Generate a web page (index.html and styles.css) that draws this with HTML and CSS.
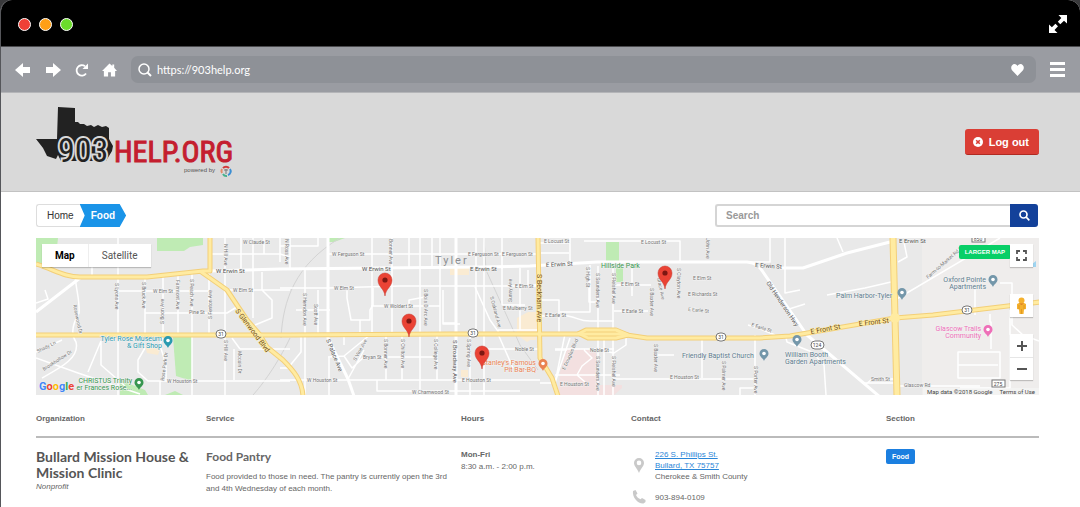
FILE: index.html
```html
<!DOCTYPE html>
<html lang="en">
<head>
  <meta charset="UTF-8">
  <meta name="viewport" content="width=device-width, initial-scale=1.0">
  <title>903Help.org - Food</title>
  <link rel="stylesheet" href="styles.css">
</head>
<body>

  <!-- Browser frame -->
  <div class="window">
    <div class="titlebar">
      <div class="dots">
        <span class="dot red"></span>
        <span class="dot orange"></span>
        <span class="dot green"></span>
      </div>
      <button class="icon-btn" aria-label="Full screen">
        <svg width="18" height="18" viewBox="0 0 18 18" fill="#fff"><path d="M9.500 0H18V8.500L15 5.800L11.300 9.300L8.800 6.800L12.300 3Z"/><path d="M0 9.500L2.900 12.300L6.400 8.700L9 11.200L5.500 15L8.500 18H0Z"/></svg>
      </button>
    </div>

    <div class="toolbar">
      <button class="icon-btn" aria-label="Back">
        <svg width="16" height="14" viewBox="0 0 16 14" fill="#fff"><path d="M0 7L8 0V4H15V10H8V14Z"/></svg>
      </button>
      <button class="icon-btn" aria-label="Forward">
        <svg width="16" height="14" viewBox="0 0 16 14" fill="#fff"><path d="M16 7L8 0V4H1V10H8V14Z"/></svg>
      </button>
      <button class="icon-btn" aria-label="Reload">
        <svg width="13" height="14" viewBox="0 0 13 14"><path d="M11 10.500A5.200 5.200 0 1 1 10 3.300" fill="none" stroke="#fff" stroke-width="1.800"/><path d="M13 0.500V6H7.500Z" fill="#fff"/></svg>
      </button>
      <button class="icon-btn" aria-label="Home">
        <svg width="15" height="14" viewBox="0 0 16 14" fill="#fff"><path d="M8 0L11 2.800V1H13V4.700L16 8H14V14H9.500V9.500H6.500V14H2V8H0Z"/></svg>
      </button>
      <div class="address">
        <svg width="14" height="14" viewBox="0 0 14 14" fill="none" stroke="#fff"><circle cx="6" cy="6" r="5" stroke-width="1.500"/><path d="M9.500 9.500L13 13" stroke-width="2"/></svg>
        <input type="text" value="https://903help.org" aria-label="Address">
        <svg width="13" height="12" viewBox="0 0 13 12" fill="#fff"><path d="M6.500 12L1 6.300C-1 3.500 1 0 3.500 0C5 0 6 1 6.500 2C7 1 8 0 9.500 0C12 0 14 3.500 12 6.300Z"/></svg>
      </div>
      <button class="icon-btn menu" aria-label="Menu">
        <svg width="15" height="15" viewBox="0 0 15 15" fill="#fff"><path d="M0 0H15V3H0ZM0 6H15V9H0ZM0 12H15V15H0Z"/></svg>
      </button>
    </div>

    <header class="site-header">
      <a href="#" class="logo" aria-label="903Help.org">
        <svg width="200" height="74" viewBox="0 0 200 74">
          <path d="M22 2L39 3V17L42 17L44 19L48 19L51 21L55 20L58 22L62 20L66 22L70 21L73 23L73 34L77 41L76 46L73 51L70 56L25 56L22 50L20 54L11 51L7 43L0 34L21 34Z" fill="#222"/>
          <text class="logo-903" x="22" y="57">903</text>
          <text class="logo-help" x="78" y="57">HELP.ORG</text>
          <text class="logo-by" x="148" y="67">powered by</text>
          <g fill="none" stroke-width="2">
            <path d="M187 63A4 4 0 0 1 193 63" stroke="#d33b3b"/>
            <path d="M194 64A4 4 0 0 1 192 70" stroke="#3b8ed3"/>
            <path d="M191 71A4 4 0 0 1 187 69" stroke="#45b08c"/>
            <path d="M186 68A4 4 0 0 1 186 64" stroke="#e48a68"/>
          </g>
          <path d="M188 65H192M190 64V69" stroke="#777"/>
        </svg>
      </a>
      <button class="logout">
        <svg width="10" height="10" viewBox="0 0 10 10"><circle cx="5" cy="5" r="5" fill="#fff"/><path d="M3.200 3.200L6.800 6.800M6.800 3.200L3.200 6.800" stroke="#da3e35" stroke-width="1.600"/></svg>
        Log out
      </button>
    </header>

    <main>
      <div class="top-row">
        <nav class="crumbs" aria-label="Breadcrumb">
          <a href="#" class="crumb">Home</a>
          <a href="#" class="crumb active">Food</a>
        </nav>
        <form class="search">
          <input type="text" placeholder="Search" aria-label="Search">
          <button type="button" aria-label="Search">
            <svg width="11" height="11" viewBox="0 0 11 11" fill="none" stroke="#fff" stroke-width="1.700"><circle cx="4.500" cy="4.500" r="3.500"/><path d="M7.200 7.200L10.300 10.300"/></svg>
          </button>
        </form>
      </div>

      <div class="map">
        <svg class="map-canvas" viewBox="36 238 1003 157" preserveAspectRatio="xMidYMid slice">
          <defs>
            <g id="pin">
              <path d="M0 0C-1 -8 -7 -9 -7 -16A7 7 0 0 1 7 -16C7 -9 1 -8 0 0Z" fill="#ea4335" stroke="#c5372c" stroke-width="0.500"/>
              <circle cy="-16" r="2.600" fill="#7c1712"/>
            </g>
            <g id="poi">
              <path d="M0 0C-1 -3 -4.500 -4 -4.500 -7.500A4.500 4.500 0 0 1 4.500 -7.500C4.500 -4 1 -3 0 0Z"/>
              <circle cy="-7.500" r="1.800" fill="#fff"/>
            </g>
          </defs>

          <!-- land -->
          <path d="M36 238H1039V395H36Z" fill="#e9e9e9"/>
          <path d="M922 238H1039V395H922Z" fill="#efedec"/>
          <g fill="#bfebb4">
            <path d="M36 238H58L55 266L36 264Z"/>
            <path d="M157 238H203V245L190 247L184 251H157Z"/>
            <path d="M173 337H192V381L176 376Z"/>
            <path d="M120 380L145 390L148 395H120ZM165 395L175 391L183 395Z"/>
            <path d="M329 238H345L334 242H329Z"/>
            <path d="M606 242H619V262H606ZM616 268H623V282H616Z"/>
          </g>
          <path d="M567 348L584 349L596 352L600 385H622V388L614 395H558L560 372Z" fill="#f3e0e0"/>
          <path d="M517 318L528 312H538V335L527 342L517 335ZM450 268H469V275H450ZM461 370H468V377H461ZM530 312H536V340H530ZM145 346L160 349L158 355L147 353Z" fill="#faebd2"/>
          <path d="M1028 267L1036 261V267Z" fill="#9fd4f0"/>

          <!-- railways -->
          <path d="M281 338C283 300 295 265 340 238M484 238L486 270L520 345L538 370M290 338C277 365 262 385 253 395" fill="none" stroke="#d3d3d3"/>

          <!-- side streets -->
          <g class="minor">
            <path d="M92 267V275M118 238V395M145 275V335M163 275V335L160 345L166 365V381M178 275V335M192 271V395M209 271V335M225 238V395M241 238V271M264 238V254M280 238V262M253 238V318M290 238V269"/>
            <path d="M210 254H280L290 257M118 291H210M227 290H290M145 313H227L240 305M262 272V290L272 300V318L255 325M240 349H290M240 349L232 338M234 349V380"/>
            <path d="M75 275C76 290 80 300 79 313C72 325 71 335 76 342C80 358 60 368 42 378M36 352L62 340M36 358L78 373L140 394M101 341L88 372M101 341V365L125 386M145 348L138 360V372L148 381H290M36 303L48 299L45 290M160 381V395"/>
            <path d="M280 246H318V238M328 254H538M328 269V238M392 238V335M372 238V333M440 238V333M409 238V269M420 238V333M432 238V269M476 238V334M484 238V395M502 238V269M520 268V330M528 270V285H540"/>
            <path d="M280 288H328L400 286H540M347 287V298L351 320H370V310L373 305V288M296 310H330M305 269V395M318 290V334M373 300V306M371 306H440M409 306V300L425 297M443 290V324H460M360 320V334M498 330H540M502 268V305H525M475 287L490 320L500 334"/>
            <path d="M301 335V352L288 368H280M328 357L344 356L371 334M344 334V345M344 356L352 368L364 357H420M348 379L364 350M386 334V380M402 334V380M420 334V395M437 334V380M404 357H437M280 380H540M329 357V395M377 380V391H520M484 380V391M470 334V395M498 334L513 368M484 349H540M457 323H443"/>
            <path d="M540 243H570V238M570 238V262M584 241H680V262M541 253H569M540 300H559V334M541 316H568C580 318 578 321 590 321H614M598 266V395M590 265V312H560M613 264V395M589 267V302H598M555 350H567M604 335V395M614 311H648M614 285H651M632 265V296M651M651 262V320H655V395M636 243V262M691 238V262M664 262V290L672 308L675 310H722V315L711 322M674 266V395M682 266V310M674 293H740L745 287V262M674 278H744M736 293L737 312M702 264V340M723 300V395M637 262V238M707 238V250H752"/>
            <path d="M540 383H555L565 334M555 375H620M555 383L560 367L570 338M614 349H555M584 350L592 358L582 366L577 375L585 382M598 350L614 353L626 345V334M614 379H758M655 355H674M702 340V378M755 335V395M742 388H758M740 395V388H758M775 335L758 328L748 325M770 238V262H745M785 238V293L800 290M786 310L805 304M827 295L865 288 891 282M826 395L824 365L812 352L787 342L786 338M865 385L872 379H895M862 383H900M897 386H980M837 238L843 252"/>
            <path d="M904 242L907 257L898 262M895 300L1000 238M975 315V287M990 314V322H991V349M1000 283H1012V325L1023 335L1039 341M1010 310V388H960M958 352H1000V378H958ZM958 365H998M978 238V240"/>
          </g>
          <g class="avenue">
            <path d="M36 312L80 278"/>
            <path d="M210 271L280 269L480 267L530 266L597 262H747C756 263 759 266 763 272L807 335L880 397" />
            <path d="M328 238V338L348 379L354 396M456 238V396"/>
            <path d="M780 268H803L847 253L890 242"/>
          </g>

          <!-- highways -->
          <g class="hwy-edge">
            <path d="M36 264C55 270 65 277 80 277H147L203 271H210V238"/>
            <path d="M200 271L227 290L247 320L260 335L267 347L283 360C293 370 302 380 303 396"/>
            <path d="M36 335H290L450 334H620L647 338H760L790 336L895 318L933 315L1040 302"/>
            <path d="M578 334L586 330H616L628 335M580 334L588 338H616L628 335"/>
            <path d="M538 238L540 358L552 378L558 396"/>
            <path d="M893 238L895 318L897 396" stroke-width="7"/>
          </g>
          <g class="hwy">
            <path d="M36 264C55 270 65 277 80 277H147L203 271H210V238"/>
            <path d="M200 271L227 290L247 320L260 335L267 347L283 360C293 370 302 380 303 396"/>
            <path d="M36 335H290L450 334H620L647 338H760L790 336L895 318L933 315L1040 302"/>
            <path d="M578 334L586 330H616L628 335M580 334L588 338H616L628 335"/>
            <path d="M538 238L540 358L552 378L558 396"/>
            <path d="M893 238L895 318L897 396" stroke-width="5"/>
            <circle cx="895" cy="318" r="5" fill="#ffeba1" stroke="none"/>
          </g>

          <!-- street names -->
          <g class="st">
            <text x="243" y="244">W Claude St</text>
            <text x="153" y="293">W Elm St</text>
            <text x="233" y="292">W Elm St</text>
            <text x="189" y="314">Pine St</text>
            <text x="167" y="383">W Houston St</text>
            <text x="332" y="256">W Ferguson St</text>
            <text x="334" y="290">W Elm St</text>
            <text x="384" y="308">W Woldert St</text>
            <text x="363" y="359">Bryan St</text>
            <text x="307" y="382">W Houston St</text>
            <text x="412" y="394">W Charnwood St</text>
            <text x="468" y="256">E Ferguson St</text>
            <text x="502" y="256">E Ferguson St</text>
            <text x="515" y="288">E Elm St</text>
            <text x="503" y="310">E Mulberry St</text>
            <text x="515" y="351">Noble St</text>
            <text x="462" y="382">E Houston St</text>
            <text x="544" y="243">E Locust St</text>
            <text x="641" y="244">E Locust St</text>
            <text x="621" y="286">E Elm St</text>
            <text x="693" y="280">E Elm St</text>
            <text x="688" y="296">E Richards St</text>
            <text x="545" y="317">E Earle St</text>
            <text x="622" y="313">E Earle St</text>
            <text transform="translate(688 311) rotate(5)">E Earle St</text>
            <text transform="translate(751 326) rotate(18)">E Earle St</text>
            <text x="590" y="352">Noble St</text>
            <text x="560" y="386">E Houston St</text>
            <text x="670" y="379">E Houston St</text>
            <text x="871" y="381">Smith St</text>
            <text x="904" y="387">Glascow Rd</text>
            <text transform="translate(928 279) rotate(-41)">Farm-to-Market Rd 2</text>
            <text transform="translate(38 353) rotate(-27)">Shady Ln</text>
            <text transform="translate(44 371) rotate(-33)">Brookhollow Dr</text>
            <text transform="translate(73 305) rotate(78)">Rosewood Dr</text>
            <text transform="translate(115 283) rotate(90)">S Lyons Ave</text>
            <text transform="translate(142 282) rotate(90)">S Bruck Ave</text>
            <text transform="translate(164 324) rotate(-90)">S Boon Ave</text>
            <text transform="translate(176 280) rotate(90)">Fairmont Ave</text>
            <text transform="translate(190 279) rotate(90)">S Peach Ave</text>
            <text transform="translate(212 319) rotate(-90)">S Fenton Ave</text>
            <text transform="translate(224 244) rotate(90)">N Hill Ave</text>
            <text transform="translate(285 239) rotate(90)">N Ross Ave</text>
            <text transform="translate(224 340) rotate(90)">S Hill Ave</text>
            <text transform="translate(238 351) rotate(90)">Mccain Dr</text>
            <text transform="translate(164 381) rotate(-82)">Rose Park Dr</text>
            <text transform="translate(303 293) rotate(90)">S Herndon Ave</text>
            <text transform="translate(314 304) rotate(90)">Scott Ave</text>
            <text transform="translate(389 239) rotate(90)">Bonner Ave</text>
            <text transform="translate(424 289) rotate(90)">S Bois D Arc Ave</text>
            <text transform="translate(490 297) rotate(75)">S Oakland Ave</text>
            <text transform="translate(512 302) rotate(-90)">Sunny Ave</text>
            <text transform="translate(356 361) rotate(-61)">S Vine Ave</text>
            <text transform="translate(384 339) rotate(90)">S Bonner Ave</text>
            <text transform="translate(401 339) rotate(90)">S Chilton Ave</text>
            <text transform="translate(434 339) rotate(90)">S College Ave</text>
            <text transform="translate(467 339) rotate(90)">S Spring Ave</text>
            <text transform="translate(586 267) rotate(90)">S High St</text>
            <text transform="translate(596 273) rotate(90)">S Saunders Ave</text>
            <text transform="translate(612 273) rotate(90)">S Fleishel Ave</text>
            <text transform="translate(650 288) rotate(90)">S Baxter Ave</text>
            <text transform="translate(657 278) rotate(78)">Grace Ave</text>
            <text transform="translate(677 268) rotate(90)">S Clayton Ave</text>
            <text transform="translate(706 238) rotate(90)">John Ave</text>
            <text transform="translate(565 370) rotate(-66)">E Douglas Blvd</text>
            <text transform="translate(596 356) rotate(90)">S Saunders Ave</text>
            <text transform="translate(612 356) rotate(90)">S Fleishel Ave</text>
            <text transform="translate(654 344) rotate(90)">S Baxter Ave</text>
            <text transform="translate(722 361) rotate(90)">S Palmer Ave</text>
            <text transform="translate(754 366) rotate(90)">S Porter Ave</text>
          </g>
          <g class="st big">
            <text x="216" y="273">W Erwin St</text>
            <text x="362" y="271">W Erwin St</text>
            <text x="470" y="271">E Erwin St</text>
            <text transform="translate(546 267) rotate(-3)">E Erwin St</text>
            <text transform="translate(755 267) rotate(4)">E Erwin St</text>
            <text x="899" y="243">E Erwin St</text>
            <text transform="translate(326 340) rotate(68)">S Palace Ave</text>
            <text transform="translate(453 340) rotate(90)">S Broadway Ave</text>
            <text transform="translate(766 283) rotate(56)">Old Henderson Hwy</text>
          </g>
          <g class="st road">
            <text transform="translate(235 311) rotate(53)">S Glenwood Blvd</text>
            <text transform="translate(537 274) rotate(90)">S Beckham Ave</text>
            <text transform="translate(811 334) rotate(-10)">E Front St</text>
            <text transform="translate(859 326) rotate(-6)">E Front St</text>
          </g>

          <!-- route shields -->
          <g class="shield">
            <rect x="216" y="330" width="10" height="8" rx="4"/><text x="221" y="336">31</text>
            <rect x="468" y="329" width="10" height="8" rx="4"/><text x="473" y="335">31</text>
            <rect x="716" y="333" width="10" height="8" rx="4"/><text x="721" y="339">31</text>
            <rect x="962" y="306" width="10" height="8" rx="4"/><text x="967" y="312">31</text>
            <rect x="811" y="341" width="13" height="8" rx="4"/><text x="817" y="347">124</text>
            <rect x="992" y="380" width="13" height="7"/><text x="998" y="386">275</text>
            <rect x="972" y="235" width="13" height="7"/><text x="978" y="241">850</text>
          </g>

          <!-- places -->
          <text class="town" x="435" y="264">Tyler</text>
          <g class="place" fill="#2a9ab0">
            <text x="162" y="341" text-anchor="end">Tyler Rose Museum</text>
            <text x="162" y="348" text-anchor="end">&amp; Gift Shop</text>
            <use href="#poi" x="168" y="348"/>
          </g>
          <g class="place" fill="#37964f">
            <text x="132" y="383" text-anchor="end">CHRISTUS Trinity</text>
            <text x="132" y="390" text-anchor="end">er Frances Rose...</text>
            <use href="#poi" x="139" y="390"/>
            <text x="601" y="268">Hillside Park</text>
          </g>
          <g class="place" fill="#ea8252">
            <text x="536" y="365" text-anchor="end">Stanley's Famous</text>
            <text x="536" y="372" text-anchor="end">Pit Bar-BQ</text>
            <use href="#poi" x="543" y="371"/>
          </g>
          <g class="place" fill="#607d8e">
            <text x="682" y="358">Friendly Baptist Church</text>
            <text x="785" y="357">William Booth</text>
            <text x="785" y="364">Garden Apartments</text>
            <text x="836" y="298">Palm Harbor-Tyler</text>
            <text x="986" y="282" text-anchor="end">Oxford Pointe</text>
            <text x="986" y="289" text-anchor="end">Apartments</text>
          </g>
          <g fill="#7497aa">
            <use href="#poi" x="764" y="361"/>
            <use href="#poi" x="797" y="347"/>
            <use href="#poi" x="902" y="300"/>
            <use href="#poi" x="993" y="287"/>
          </g>
          <g class="place" fill="#ee6fb8">
            <text x="981" y="331" text-anchor="end">Glascow Trails</text>
            <text x="981" y="338" text-anchor="end">Community</text>
            <use href="#poi" x="988" y="337"/>
          </g>

          <!-- results -->
          <use href="#pin" x="385" y="296"/>
          <use href="#pin" x="409" y="337"/>
          <use href="#pin" x="482" y="369"/>
          <use href="#pin" x="665" y="289"/>
        </svg>

        <div class="map-type">
          <button class="on">Map</button>
          <button>Satellite</button>
        </div>
        <div class="google"><span class="b">G</span><span class="r">o</span><span class="y">o</span><span class="b">g</span><span class="g">l</span><span class="r">e</span></div>
        <button class="larger">LARGER MAP</button>
        <div class="map-tools">
          <button class="tool" aria-label="Full screen map">
            <svg width="11" height="11" viewBox="0 0 11 11" fill="none" stroke="#555" stroke-width="1.800"><path d="M1 4V1H4M7 1H10V4M10 7V10H7M4 10H1V7"/></svg>
          </button>
          <button class="tool pegman" aria-label="Street View">
            <svg width="11" height="18" viewBox="0 0 11 18"><path d="M3 6H8L10 7V12L8 12.500L7.500 17H3.500L3 12.500L1 12V7Z" fill="#f5b12e"/><circle cx="5.500" cy="3.500" r="3" fill="#f5b12e"/><path d="M3 6.500H8L5.500 8Z" fill="#db7c25"/><path d="M5.500 12V17M3 8V12M8 8V12" stroke="#d18b1c" stroke-width="0.600"/></svg>
          </button>
          <div class="zoom">
            <button class="tool" aria-label="Zoom in"><svg width="10" height="10" viewBox="0 0 10 10" fill="#555"><path d="M4 0H6V4H10V6H6V10H4V6H0V4H4Z"/></svg></button>
            <button class="tool" aria-label="Zoom out"><svg width="10" height="10" viewBox="0 0 10 10" fill="#555"><path d="M0 4H10V6H0Z"/></svg></button>
          </div>
        </div>
        <div class="map-credit"><span>Map data ©2018 Google</span><a href="#">Terms of Use</a></div>
      </div>

      <table class="results">
        <colgroup>
          <col class="c-narrow"><col class="c-wide"><col class="c-narrow"><col class="c-wide"><col>
        </colgroup>
        <thead>
          <tr>
            <th>Organization</th>
            <th>Service</th>
            <th>Hours</th>
            <th>Contact</th>
            <th>Section</th>
          </tr>
        </thead>
        <tbody>
          <tr>
            <td>
              <h2>Bullard Mission House &amp; Mission Clinic</h2>
              <em>Nonprofit</em>
            </td>
            <td>
              <h3>Food Pantry</h3>
              <p class="desc">Food provided to those in need. The pantry is currently open the 3rd and 4th Wednesday of each month.</p>
            </td>
            <td class="hours">
              <b>Mon-Fri</b><br>
              8:30 a.m. - 2:00 p.m.
            </td>
            <td>
              <div class="contact">
                <svg width="16" height="15" viewBox="0 0 16 15" fill="#c9c9c9"><path fill-rule="evenodd" d="M8 0A5 5 0 0 0 3 5C3 8 6 10 8 15C10 10 13 8 13 5A5 5 0 0 0 8 0ZM8 2.600A2.300 2.300 0 1 1 8 7.200A2.300 2.300 0 1 1 8 2.600Z"/></svg>
                <div>
                  <a href="#">226 S. Phillips St.<br>Bullard, TX 75757</a><br>
                  Cherokee &amp; Smith County
                </div>
              </div>
              <div class="contact phone">
                <svg width="16" height="14" viewBox="0 0 16 14" fill="#c9c9c9"><path d="M2 1L4.500 0L6.500 3.500L5 5C6 7.200 7.500 8.500 9.500 9.300L11 8L14.500 10V12L12.500 13.500C7 14 1 7.500 2 1Z"/></svg>
                <div>903-894-0109</div>
              </div>
            </td>
            <td><a href="#" class="tag">Food</a></td>
          </tr>
        </tbody>
      </table>
    </main>
  </div>

</body>
</html>
```
FILE: styles.css
```css
* {
  box-sizing: border-box;
}
body {
  margin: 0;
  background: #3a3a3c;
  font-family: "Liberation Sans", Arial, sans-serif;
  font-size: 8px;
  color: #666;
}
button {
  border: none;
  padding: 0;
  font-family: inherit;
  cursor: pointer;
}
svg {
  display: block;
}

/* browser frame */
.window {
  min-height: 100vh;
  border-left: 1px solid #55565a;
  border-radius: 12px 12px 0 0;
  background: #fff;
  overflow: hidden;
}
.titlebar {
  display: flex;
  align-items: center;
  justify-content: space-between;
  height: 47px;
  padding: 2px 13px 0 17px;
  background: #000;
  border-bottom: 1px solid #4a4a4d;
}
.dots {
  display: flex;
  gap: 8px;
}
.dot {
  width: 13px;
  height: 13px;
  border: 1px solid #fff;
  border-radius: 50%;
}
.red { background: #ef4136; }
.orange { background: #ff9f15; }
.green { background: #6bdc2b; }
.icon-btn {
  background: none;
}
.toolbar {
  display: flex;
  align-items: center;
  gap: 14px;
  height: 46px;
  padding: 0 15px 0 14px;
  background: #9a9ca2;
  border-bottom: 1px solid #b4b5b8;
}
.address {
  flex: 1;
  display: flex;
  align-items: center;
  gap: 5px;
  height: 27px;
  padding: 0 12px 0 7px;
  background: #8e9197;
  border-radius: 7px;
}
.address input {
  flex: 1;
  min-width: 0;
  padding: 0;
  border: none;
  background: none;
  font: 11px Lato, sans-serif;
  color: #fff;
}

/* header */
.site-header {
  display: flex;
  align-items: center;
  justify-content: space-between;
  height: 99px;
  padding: 0 41px 0 35px;
  background: #d9d9d9;
  border-bottom: 1px solid #c2c2c2;
}
.logo-903,
.logo-help {
  font-family: "Roboto Condensed", "Liberation Sans Narrow", sans-serif;
}
.logo-903 {
  font-size: 34px;
  fill: #222;
  stroke: #d9d9d9;
  stroke-width: 4px;
  paint-order: stroke;
}
.logo-help {
  font-size: 30px;
  fill: #c41e2f;
  stroke: #c41e2f;
  stroke-width: 1px;
}
.logo-by {
  font-size: 6px;
  fill: #555;
}
.logout {
  display: flex;
  align-items: center;
  gap: 6px;
  height: 26px;
  padding: 0 10px 0 8px;
  background: #da3e35;
  border-bottom: 1px solid #b02a22;
  border-radius: 3px;
  font-size: 11px;
  font-weight: bold;
  color: #fff;
}

/* breadcrumb and search */
main {
  padding: 12px 41px 0 35px;
}
.top-row {
  display: flex;
  justify-content: space-between;
  padding-right: 1px;
}
.crumbs {
  display: flex;
}
.crumb {
  height: 23px;
  padding: 0 6px 0 10px;
  border: 1px solid #ddd;
  border-right: none;
  border-radius: 3px 0 0 3px;
  font-size: 10px;
  line-height: 21px;
  color: #333;
  text-decoration: none;
}
.crumb.active {
  padding: 0 11px;
  border: none;
  border-radius: 0;
  background: #1a94e8;
  clip-path: polygon(0 0, 40px 0, 100% 50%, 40px 100%, 0 100%, 5px 50%);
  font-weight: bold;
  line-height: 23px;
  color: #fff;
}
.search {
  display: flex;
  width: 323px;
  height: 23px;
}
.search input {
  flex: 1;
  min-width: 0;
  padding: 0 9px;
  border: 2px solid #d5d5d5;
  border-right: none;
  border-radius: 3px 0 0 3px;
  font: bold 10px "Liberation Sans", Arial, sans-serif;
}
.search input::placeholder {
  color: #999;
}
.search button {
  display: grid;
  place-items: center;
  width: 28px;
  background: #13419a;
  border-radius: 0 3px 3px 0;
}

/* map */
.map {
  position: relative;
  height: 157px;
  margin-top: 11px;
  overflow: hidden;
  font-family: Roboto, sans-serif;
}
.map-canvas {
  width: 100%;
  height: 100%;
}
.minor,
.avenue,
.hwy,
.hwy-edge {
  fill: none;
  stroke-linejoin: round;
}
.minor {
  stroke: #fff;
  stroke-width: 1.5px;
}
.avenue {
  stroke: #fff;
  stroke-width: 3px;
}
.hwy-edge {
  stroke: #f3cf78;
  stroke-width: 5px;
}
.hwy {
  stroke: #ffeba1;
  stroke-width: 3px;
}
.st {
  font-size: 5px;
  fill: #777;
  stroke: #f3f3f3;
  stroke-width: 1px;
  paint-order: stroke;
}
.st.big {
  font-size: 6px;
  fill: #555;
}
.st.road {
  font-size: 7px;
  fill: #6d4b1c;
  stroke: #ffeba1;
}
.shield {
  font-size: 5px;
  text-anchor: middle;
}
.shield rect {
  fill: #fff;
  stroke: #777;
}
.shield text {
  fill: #444;
}
.town {
  font-size: 11px;
  letter-spacing: 2px;
  fill: #8c8f93;
}
.place text {
  font-size: 7px;
  stroke: #f3f3f3;
  stroke-width: 1px;
  paint-order: stroke;
}
.map-type {
  position: absolute;
  top: 6px;
  left: 6px;
  display: flex;
  background: #fff;
  box-shadow: 0 1px 1px rgba(0, 0, 0, 0.2);
}
.map-type button {
  height: 23px;
  padding: 0 13px;
  background: none;
  font-size: 10px;
  color: #555;
}
.map-type .on {
  border-right: 1px solid #eee;
  font-weight: bold;
  color: #000;
}
.google {
  position: absolute;
  left: 3px;
  bottom: 1px;
  font-size: 11px;
  font-weight: bold;
  line-height: 14px;
  text-shadow: 0 0 1px #fff;
}
.b { color: #4285f4; }
.r { color: #ea4335; }
.y { color: #fbbc05; }
.g { color: #34a853; }
.larger {
  position: absolute;
  top: 7px;
  right: 28px;
  height: 14px;
  padding: 0 6px;
  background: #08cf67;
  border-radius: 2px;
  font: bold 6px "Liberation Sans", Arial, sans-serif;
  color: #fff;
}
.map-tools {
  position: absolute;
  top: 6px;
  right: 6px;
}
.tool {
  display: grid;
  place-items: center;
  width: 23px;
  height: 23px;
  background: #fff;
  box-shadow: 0 1px 1px rgba(0, 0, 0, 0.2);
}
.pegman {
  margin: 27px 0 17px;
}
.zoom {
  background: #fff;
}
.zoom .tool + .tool {
  border-top: 1px solid #e6e6e6;
}
.map-credit {
  position: absolute;
  right: 0;
  bottom: 0;
  display: flex;
  gap: 7px;
  padding: 0 4px;
  background: rgba(245, 245, 245, 0.7);
  font-size: 6px;
  line-height: 7px;
  color: #444;
}
.map-credit a {
  color: #444;
  text-decoration: none;
}

/* results table */
.results {
  width: 100%;
  table-layout: fixed;
  border-collapse: collapse;
}
.c-narrow { width: 170px; }
.c-wide { width: 255px; }
.results th {
  height: 42px;
  padding: 5px 0 0;
  border-bottom: 2px solid #bbb;
  text-align: left;
  vertical-align: middle;
}
.results td {
  padding: 11px 0 0;
  vertical-align: top;
}
h2,
h3 {
  margin: 0;
  font-family: Lato, sans-serif;
  line-height: 16px;
}
h2 {
  font-size: 14px;
  color: #555;
}
h3 {
  font-size: 12px;
}
em {
  display: block;
  line-height: 12px;
}
.desc {
  width: 245px;
  margin: 6px 0 0;
  line-height: 12px;
}
.hours {
  line-height: 12px;
}
.contact {
  display: flex;
  align-items: center;
  gap: 8px;
  line-height: 11px;
}
.contact.phone {
  margin-top: 8px;
}
.contact a {
  color: #2a86d8;
}
.tag {
  display: inline-block;
  padding: 0 6px;
  background: #1b7fe0;
  border-radius: 2px;
  font-size: 7px;
  font-weight: bold;
  line-height: 15px;
  color: #fff;
  text-decoration: none;
}
```
